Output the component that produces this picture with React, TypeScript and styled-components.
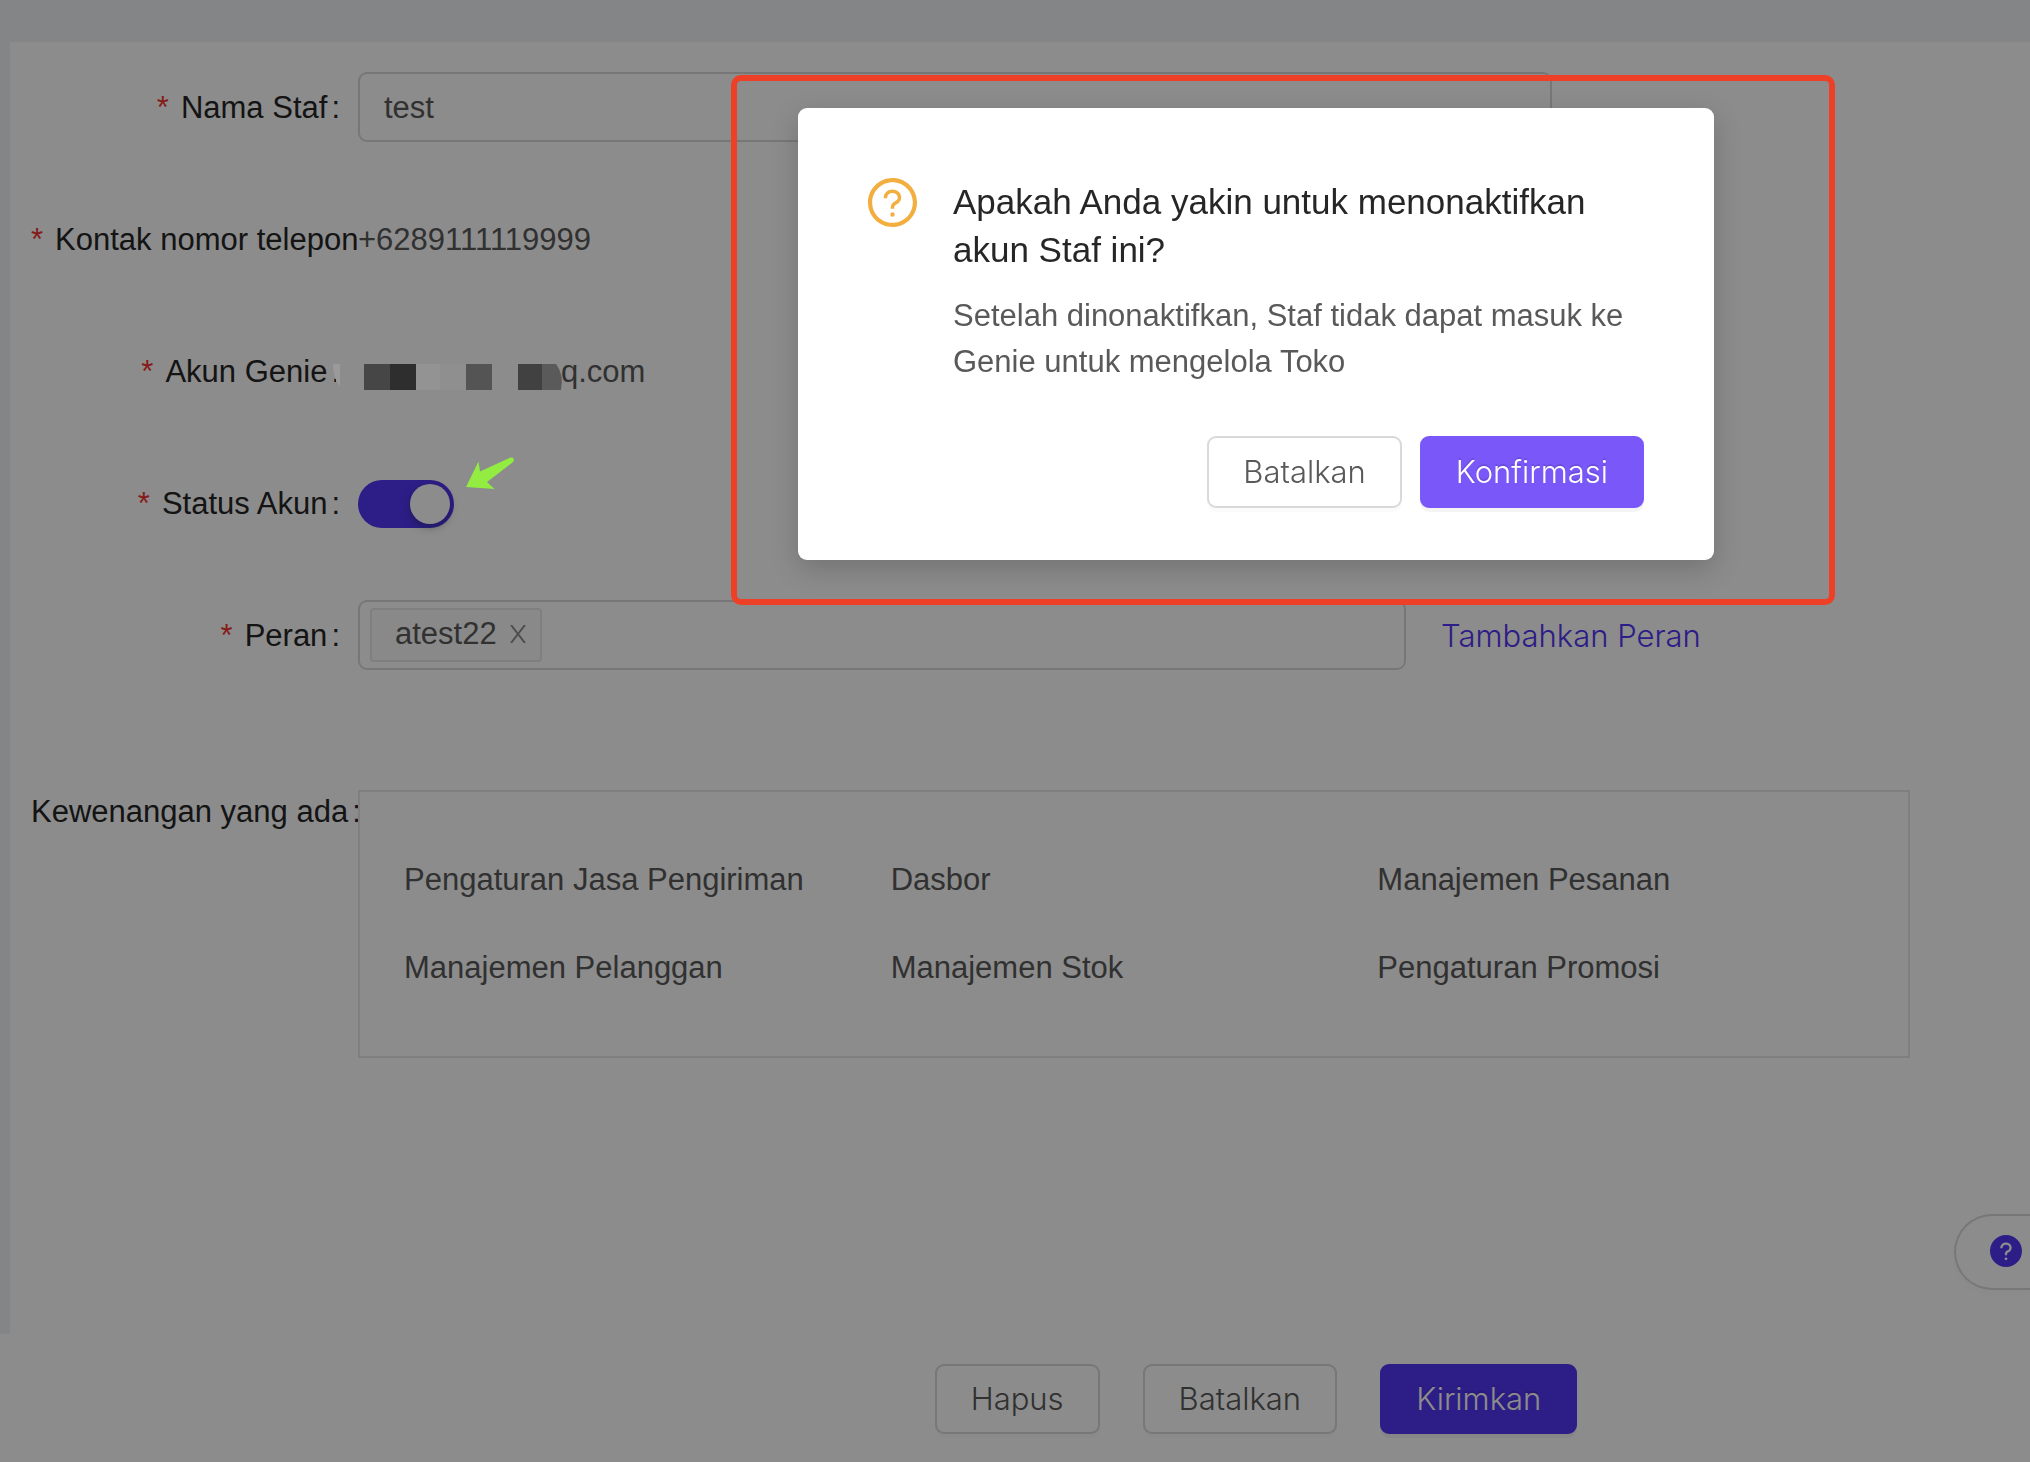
import React from 'react';
import styled, { createGlobalStyle } from 'styled-components';
import { AiFillQuestionCircle, AiOutlineQuestionCircle } from 'react-icons/ai';

const color = {
  primary: '#5235f4',
  primaryHover: '#7a57f9',
  border: '#d9d9d9',
  borderLight: '#e8e8e8',
  heading: '#262626',
  text: '#595959',
  required: '#f5332f',
  warning: '#f2ae3f',
  page: '#f0f2f5',
};

const textFont = "'Liberation Sans', Arial, sans-serif";
const uiFont = "Inter, 'Liberation Sans', sans-serif";

const GlobalStyle = createGlobalStyle`
  *, *::before, *::after { box-sizing: border-box; }
  body {
    margin: 0;
    background: ${color.page};
    color: ${color.text};
    font-family: ${textFont};
    font-size: 31px;
    line-height: 46px;
  }
`;

const Page = styled.div`
  display: flex;
  flex-direction: column;
  min-height: 100vh;
  overflow: hidden;
`;

const Panel = styled.main`
  flex: 1;
  margin: 42px 0 0 10px;
  padding: 30px 120px 0 21px;
  background: #fff;
`;

const FormRow = styled.div<{ $last?: boolean }>`
  display: grid;
  grid-template-columns: 327px minmax(0, 1fr);
  grid-auto-rows: minmax(70px, auto);
  margin-bottom: ${(p) => (p.$last ? 0 : 60)}px;
`;

const RowLabel = styled.label<{ $top?: boolean }>`
  overflow: hidden;
  color: ${color.heading};
  line-height: ${(p) => (p.$top ? 44 : 72)}px;
  text-align: right;
  white-space: nowrap;

  &::after {
    content: ':';
    margin: 0 18px 0 4px;
  }
`;

const Required = styled.span`
  margin-right: 12px;
  color: ${color.required};
`;

const Field = styled.div`
  position: relative;
  display: flex;
  align-items: center;
  gap: 35px;
  min-height: 72px;
`;

const TextInput = styled.input`
  align-self: flex-start;
  width: calc(100% - 358px);
  height: 70px;
  padding: 2px 24px 0;
  border: 2px solid ${color.border};
  border-radius: 9px;
  background: #fff;
  color: ${color.text};
  font: inherit;
  outline: none;
`;

const MaskedAccount = styled.span`
  padding-left: 203px;
`;

const Mosaic = styled.svg`
  position: absolute;
  left: -26px;
  top: 28px;
  z-index: 20;
`;

const Switch = styled.input`
  appearance: none;
  width: 96px;
  height: 48px;
  margin: 0;
  padding: 4px;
  border-radius: 24px;
  background: ${color.primary};

  &::after {
    content: '';
    display: block;
    width: 40px;
    height: 40px;
    margin-left: auto;
    border-radius: 50%;
    background: #fff;
    box-shadow: 0 4px 9px rgba(0, 35, 11, 0.3);
  }
`;

const Pointer = styled.svg`
  position: absolute;
  left: 108px;
  top: -11px;
  z-index: 20;
`;

const RoleSelect = styled.div`
  display: flex;
  align-items: center;
  align-self: flex-start;
  width: calc(100% - 504px);
  height: 70px;
  padding: 0 10px;
  border: 2px solid ${color.border};
  border-radius: 9px;
  background: #fff;
`;

const Tag = styled.span`
  display: inline-flex;
  align-items: center;
  gap: 13px;
  height: 54px;
  padding: 0 14px 2px 23px;
  border: 2px solid ${color.borderLight};
  border-radius: 4px;
  background: #fafafa;
`;

const TagRemove = styled.button`
  display: flex;
  padding: 0;
  border: 0;
  background: none;
  color: #8c8c8c;
`;

const AddLink = styled.a`
  color: ${color.primary};
  font-family: ${uiFont};
  font-weight: 300;
  text-decoration: none;
  white-space: nowrap;
`;

const PermissionRow = styled(FormRow)`
  margin-top: 118px;
`;

const PermissionList = styled.ul`
  display: grid;
  grid-template-columns: repeat(3, 1fr);
  margin: 0;
  padding: 44px;
  border: 2px solid ${color.borderLight};
  line-height: 88px;
  list-style: none;
`;

const Footer = styled.footer`
  display: flex;
  justify-content: center;
  gap: 43px;
  padding: 30px 0 28px 482px;
  background: #fff;
`;

const Button = styled.button<{ $tone?: 'primary' | 'hover'; $tall?: boolean }>`
  height: ${(p) => (p.$tall ? 72 : 70)}px;
  padding: 0 34px;
  border: 2px solid
    ${(p) => (p.$tone === 'hover' ? color.primaryHover : p.$tone ? color.primary : color.border)};
  border-radius: 9px;
  background: ${(p) =>
    p.$tone === 'hover' ? color.primaryHover : p.$tone ? color.primary : '#fff'};
  box-shadow: 0 4px 0 rgba(0, 0, 0, ${(p) => (p.$tone ? 0.045 : 0.016)});
  color: ${(p) => (p.$tone ? '#fff' : color.text)};
  font-family: ${uiFont};
  font-size: 31px;
  font-weight: 300;
  line-height: 46px;
  text-shadow: ${(p) => (p.$tone ? '0 -2px 0 rgba(0, 0, 0, 0.12)' : 'none')};
`;

const HelpPill = styled.button`
  position: fixed;
  right: 0;
  bottom: 172px;
  display: flex;
  align-items: center;
  width: 76px;
  height: 76px;
  padding: 0 0 2px 34px;
  border: 2px solid ${color.border};
  border-right: 0;
  border-radius: 38px 0 0 38px;
  background: #fff;
  box-shadow: 0 4px 4px rgba(0, 0, 0, 0.02);
  color: ${color.primary};
`;

const Mask = styled.div`
  position: fixed;
  inset: 0;
  z-index: 10;
  background: rgba(0, 0, 0, 0.45);
`;

const DialogWrap = styled.div`
  position: fixed;
  inset: 0;
  z-index: 30;
  display: flex;
  align-items: flex-start;
  justify-content: center;
  padding: 108px 0 0 482px;
`;

const Dialog = styled.section`
  position: relative;
  width: 916px;
  padding: 70px 70px 52px;
  border-radius: 9px;
  background: #fff;
  box-shadow: 0 9px 28px rgba(0, 0, 0, 0.18);
`;

const Highlight = styled.div`
  position: absolute;
  inset: -33px -121px -45px -67px;
  border: 6px solid #ee4026;
  border-radius: 10px;
  pointer-events: none;
`;

const DialogBody = styled.div`
  display: grid;
  grid-template-columns: 50px minmax(0, 1fr);
  column-gap: 35px;
  color: ${color.warning};
`;

const DialogTitle = styled.h1`
  margin: 0;
  color: ${color.heading};
  font-size: 35px;
  font-weight: 400;
  line-height: 48px;
`;

const DialogText = styled.p`
  margin: 19px 0 0;
  color: ${color.text};
`;

const DialogActions = styled.div`
  display: flex;
  justify-content: flex-end;
  gap: 18px;
  margin-top: 51px;
`;

const permissions = [
  'Pengaturan Jasa Pengiriman',
  'Dasbor',
  'Manajemen Pesanan',
  'Manajemen Pelanggan',
  'Manajemen Stok',
  'Pengaturan Promosi',
];

export default function App() {
  return (
    <>
      <GlobalStyle />
      <Page>
        <Panel>
          <FormRow>
            <RowLabel htmlFor="name">
              <Required>*</Required>Nama Staf
            </RowLabel>
            <Field>
              <TextInput id="name" type="text" defaultValue="test" />
            </Field>
          </FormRow>
          <FormRow>
            <RowLabel as="span">
              <Required>*</Required>Kontak nomor telepon
            </RowLabel>
            <Field>+6289111119999</Field>
          </FormRow>
          <FormRow>
            <RowLabel as="span">
              <Required>*</Required>Akun Genie
            </RowLabel>
            <Field>
              <Mosaic width="232" height="26" viewBox="0 0 232 26" aria-hidden="true">
                <path d="M3 0H32V26H0V18H4V14H0V0Z" fill="#8c8c8c" />
                <path d="M1 0H8V23Q1 14 1 0Z" fill="#9a9a9a" />
                <rect x="32" width="26" height="26" fill="#464646" />
                <rect x="58" width="26" height="26" fill="#2e2e2e" />
                <rect x="84" width="24" height="26" fill="#939393" />
                <rect x="108" width="26" height="26" fill="#8f8f8f" />
                <rect x="134" width="26" height="26" fill="#545454" />
                <rect x="186" width="24" height="26" fill="#414141" />
                <path d="M210 0H224Q232 10 229 26H210Z" fill="#5a5a5a" />
              </Mosaic>
              <MaskedAccount>q.com</MaskedAccount>
            </Field>
          </FormRow>
          <FormRow>
            <RowLabel htmlFor="status">
              <Required>*</Required>Status Akun
            </RowLabel>
            <Field>
              <Switch id="status" type="checkbox" role="switch" defaultChecked />
              <Pointer width="49" height="32" viewBox="0 0 49 32" aria-hidden="true">
                <path
                  d="M0 30L12.500 4.500L14 14.500L44.500 .500Q47.500 0 48 2.500Q48 4 46.500 5.500L21 25L28.500 32Z"
                  fill="#92ec42"
                />
              </Pointer>
            </Field>
          </FormRow>
          <FormRow $last>
            <RowLabel as="span">
              <Required>*</Required>Peran
            </RowLabel>
            <Field>
              <RoleSelect>
                <Tag>
                  atest22
                  <TagRemove type="button" aria-label="Hapus atest22">
                    <svg width="16" height="18" viewBox="0 0 16 18" aria-hidden="true">
                      <path
                        d="M1 0L15 18M15 0L1 18"
                        fill="none"
                        stroke="currentColor"
                        strokeWidth="2"
                      />
                    </svg>
                  </TagRemove>
                </Tag>
              </RoleSelect>
              <AddLink href="#peran">Tambahkan Peran</AddLink>
            </Field>
          </FormRow>
          <PermissionRow $last>
            <RowLabel as="span" $top>
              Kewenangan yang ada
            </RowLabel>
            <PermissionList>
              {permissions.map((name) => (
                <li key={name}>{name}</li>
              ))}
            </PermissionList>
          </PermissionRow>
        </Panel>
        <Footer>
          <Button type="button">Hapus</Button>
          <Button type="button">Batalkan</Button>
          <Button type="button" $tone="primary">
            Kirimkan
          </Button>
        </Footer>
        <HelpPill type="button" aria-label="Bantuan">
          <AiFillQuestionCircle size={32} viewBox="64 64 896 896" />
        </HelpPill>
      </Page>
      <Mask />
      <DialogWrap>
        <Dialog role="dialog" aria-modal="true" aria-labelledby="dialog-title">
          <Highlight />
          <DialogBody>
            <AiOutlineQuestionCircle size={49} viewBox="64 64 896 896" />
            <div>
              <DialogTitle id="dialog-title">
                Apakah Anda yakin untuk menonaktifkan akun Staf ini?
              </DialogTitle>
              <DialogText>
                Setelah dinonaktifkan, Staf tidak dapat masuk ke Genie untuk mengelola Toko
              </DialogText>
            </div>
          </DialogBody>
          <DialogActions>
            <Button type="button" $tall>
              Batalkan
            </Button>
            <Button type="button" $tone="hover" $tall>
              Konfirmasi
            </Button>
          </DialogActions>
        </Dialog>
      </DialogWrap>
    </>
  );
}
